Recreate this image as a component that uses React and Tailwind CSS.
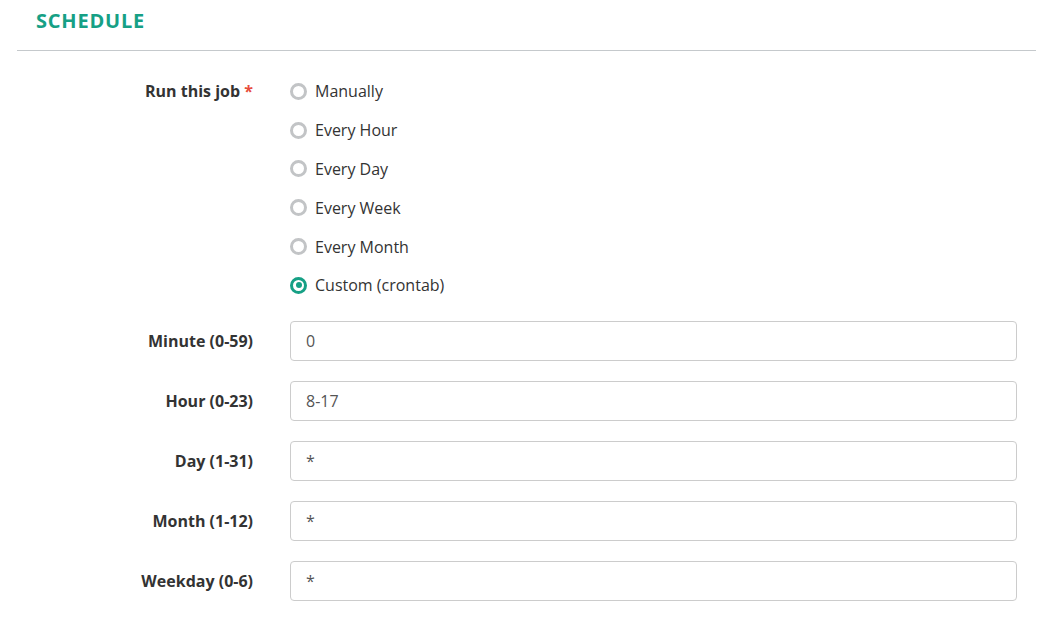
import React from "react";

const options = ["Manually", "Every Hour", "Every Day", "Every Week", "Every Month", "Custom (crontab)"];
const fields = [
  ["Minute (0-59)", "0"],
  ["Hour (0-23)", "8-17"],
  ["Day (1-31)", "*"],
  ["Month (1-12)", "*"],
  ["Weekday (0-6)", "*"],
];

function Radio({ checked }) {
  return checked ? (
    <span className="flex h-[17px] w-[17px] items-center justify-center rounded-full border-[3px] border-[#16a085] bg-white">
      <span className="h-[6px] w-[6px] rounded-full bg-[#16a085]" />
    </span>
  ) : (
    <span className="h-[17px] w-[17px] rounded-full border-[3px] border-[#c2c4c6] bg-white" />
  );
}

export default function App() {
  return (
    <div className="min-h-[633px] w-[1049px] bg-white pl-[17px] pr-[13px] text-[16px] text-[#333]" style={{ fontFamily: '"Open Sans", sans-serif' }}>
      <div className="flex h-[51px] items-center border-b border-[#c5c9cc] pb-[9px] pl-[19px]">
        <h2 className="text-[20px] font-bold leading-none tracking-[0.8px] text-[#16a085]">SCHEDULE</h2>
      </div>
      <div className="pt-[21px]">
        <div className="flex">
          <div className="w-[236px] shrink-0 pt-[9px] text-right font-bold leading-[20px]">
            Run this job <span className="text-[#e74c3c]">*</span>
          </div>
          <div className="ml-[37px] flex flex-col">
            {options.map((o, i) => (
              <label key={o} className="flex h-[38.8px] items-center gap-[8px] leading-[20px]">
                <Radio checked={i === options.length - 1} />
                <span>{o}</span>
              </label>
            ))}
          </div>
        </div>
        <div className="mt-[16px] flex flex-col gap-[20px]">
          {fields.map(([l, v]) => (
            <div key={l} className="flex items-center">
              <div className="w-[236px] shrink-0 text-right font-bold leading-[20px]">{l}</div>
              <div className="ml-[37px] flex h-[40px] w-[727px] items-center rounded-[4px] border border-[#cccccc] px-[15px] text-[#555]">
                {v}
              </div>
            </div>
          ))}
        </div>
      </div>
    </div>
  );
}
